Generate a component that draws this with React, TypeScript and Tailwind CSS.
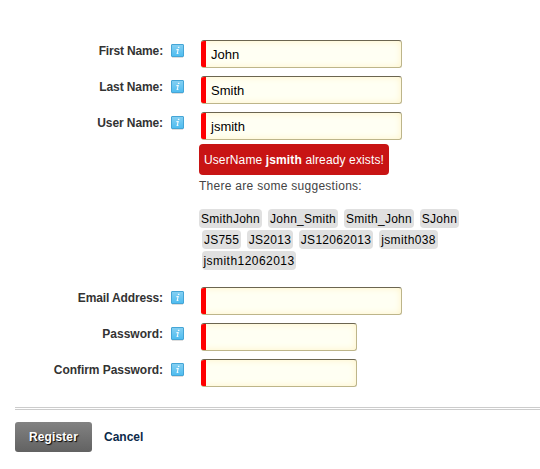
const InfoIcon = () => (
  <svg width="13" height="15" viewBox="0 0 13 15" className="mt-1 ml-2 shrink-0">
    <defs>
      <linearGradient id="info" x1="0" y1="0" x2="0" y2="1">
        <stop offset="0" stopColor="#86d0f2" />
        <stop offset="1" stopColor="#4dbcf0" />
      </linearGradient>
    </defs>
    <path d="M1 13.5h11" stroke="#dedede" />
    <rect x="0.5" y="0.5" width="12" height="12" rx="0.5" fill="url(#info)" stroke="#45a5d6" />
    <path d="M6.9 3.4h1.5M5.4 5.6h1.8L6.2 9.4h1.2" fill="none" stroke="#fff" strokeOpacity="0.9" strokeWidth="1.1" />
  </svg>
);

type FieldProps = { label: string; value?: string; labelStyle?: string; short?: boolean };

const Field = ({ label, value = "", labelStyle = "", short }: FieldProps) => (
  <div className="flex h-9">
    <div className="flex w-[184px] shrink-0 justify-end">
      <span className={`mt-[3px] h-4 text-[12px] leading-4 font-bold whitespace-nowrap text-[#333] ${labelStyle}`}>{label}</span>
      <InfoIcon />
    </div>
    <div
      className={`ml-[17px] flex h-7 overflow-hidden rounded-[3px] border border-l-0 border-t-[#6b6550] border-r-[#bdb58a] border-b-[#bdb58a] bg-[#fffff3] shadow-[inset_0_0_7px_#fff3c8] ${short ? "w-[156px]" : "w-[201px]"}`}
    >
      <div className="-my-px w-[5px] shrink-0 bg-[#f00]" />
      <span className="mt-1.5 ml-[5px] text-[13px] leading-4 text-black">{value}</span>
    </div>
  </div>
);

const Tag = ({ text, size }: { text: string; size: string }) => (
  <span className={`flex h-[19px] items-center justify-center rounded-[4px] bg-[#e0e0e0] text-[12px] leading-4 whitespace-nowrap text-black ${size}`}>
    {text}
  </span>
);

export default function App() {
  return (
    <div className="h-[469px] w-[540px] overflow-hidden bg-white pt-10 font-['Liberation_Sans',Arial,sans-serif]">
      <Field label="First Name:" value="John" labelStyle="tracking-[-0.15px]" />
      <Field label="Last Name:" value="Smith" labelStyle="tracking-[-0.1px]" />
      <Field label="User Name:" value="jsmith" labelStyle="tracking-[-0.1px]" />
      <div className="-mt-1 ml-[199px] h-[143px]">
        <div className="flex h-[31px] w-[190px] items-center justify-center rounded-[4px] bg-[#c81414] text-[12px] whitespace-pre text-white">
          <span className="tracking-[0.13px]">UserName <b>jsmith</b> already exists!</span>
        </div>
        <p className="mt-[3px] text-[12px] leading-4 tracking-[0.28px] whitespace-nowrap text-[#444]">There are some suggestions:</p>
        <div className="mt-[15px] flex gap-1.5">
          <Tag text="SmithJohn" size="w-[63px] tracking-[0.25px]" />
          <Tag text="John_Smith" size="w-[70px] tracking-[0.25px]" />
          <Tag text="Smith_John" size="w-[70px] tracking-[0.25px]" />
          <Tag text="SJohn" size="w-[39px] tracking-[0.25px]" />
        </div>
        <div className="mt-0.5 ml-[3px] flex gap-1.5">
          <Tag text="JS755" size="w-[39px] tracking-[0.2px]" />
          <Tag text="JS2013" size="w-[46px] tracking-[0.3px]" />
          <Tag text="JS12062013" size="w-[74px] tracking-[0.3px]" />
          <Tag text="jsmith038" size="w-[59px] tracking-[0.35px]" />
        </div>
        <div className="mt-0.5 ml-[3px] flex">
          <Tag text="jsmith12062013" size="w-[94px] tracking-[0.45px]" />
        </div>
      </div>
      <Field label="Email Address:" labelStyle="tracking-[-0.12px]" />
      <Field label="Password:" short labelStyle="tracking-[0px]" />
      <Field label="Confirm Password:" short labelStyle="tracking-[-0.05px]" />
      <div className="mt-3 ml-[15px] border-t-[3px] border-double border-[#ccc]" />
      <div className="mt-3 ml-[15px] flex items-center gap-3 text-[12px] font-bold">
        <button className="h-[30px] w-[77px] rounded-[3px] bg-linear-to-b from-[#828282] to-[#626262] tracking-[0.1px] text-white [text-shadow:1px_1px_1px_#000]">
          Register
        </button>
        <a className="text-[#0b2a4a]">Cancel</a>
      </div>
    </div>
  );
}
